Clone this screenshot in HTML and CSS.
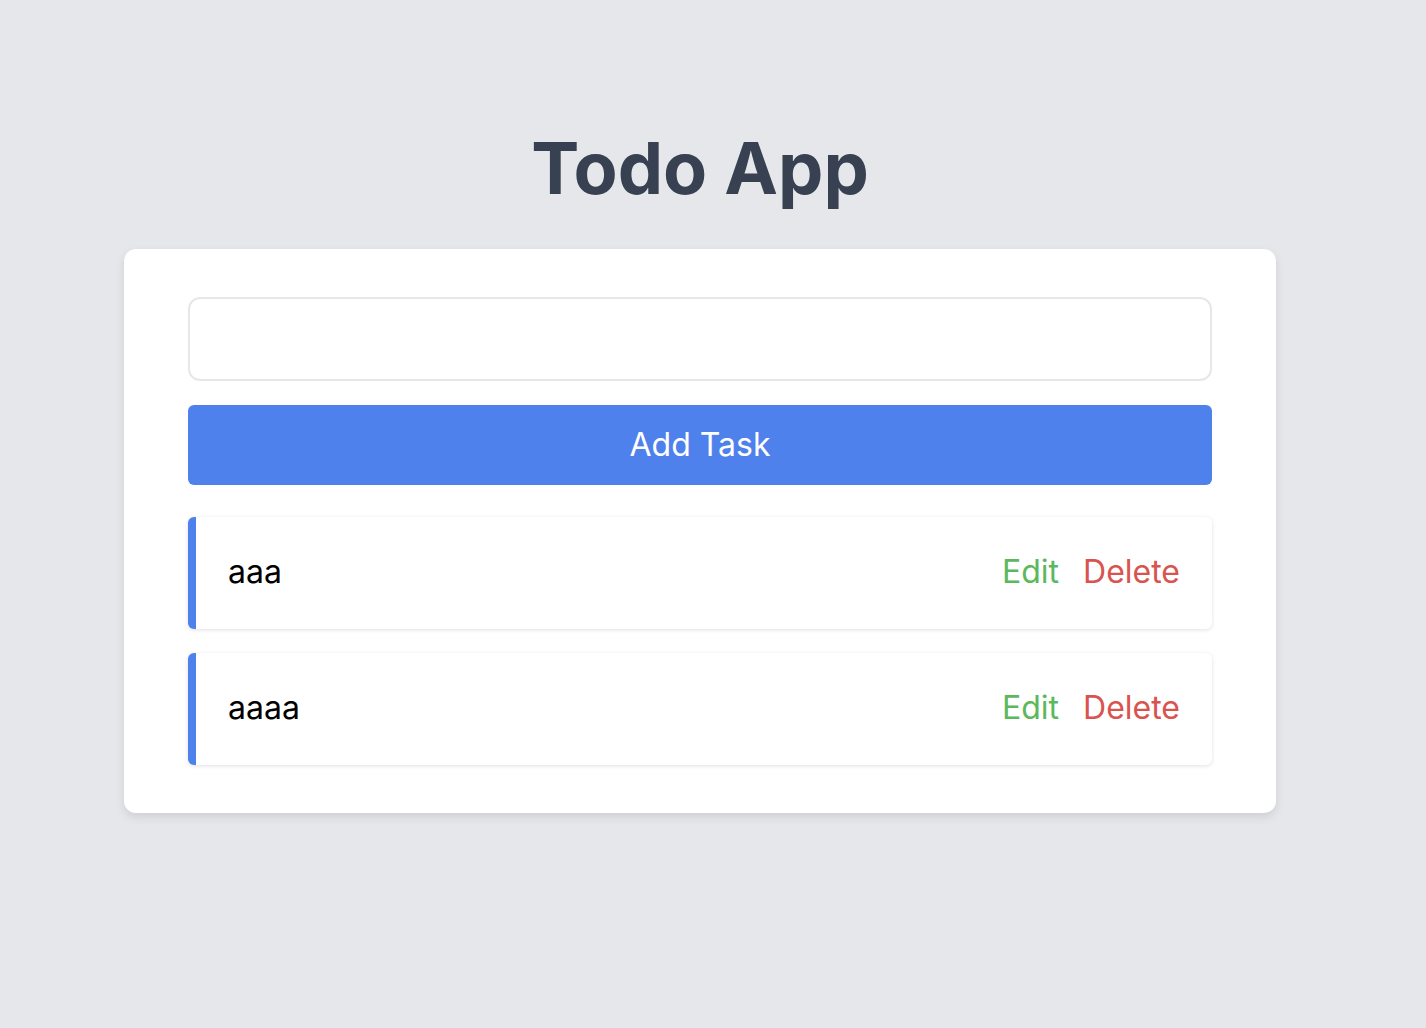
FILE: index.html
```html
<!DOCTYPE html>
<html lang="en">
<head>
<meta charset="utf-8">
<title>Todo App</title>
<link rel="stylesheet" href="styles.css">
</head>
<body>
<main class="app">
  <h1 class="title">Todo App</h1>
  <section class="card">
    <input class="task-input" type="text" aria-label="New task">
    <button class="add-btn" type="button">Add Task</button>
    <ul class="task-list">
      <li class="task">
        <span class="task-text">aaa</span>
        <div class="actions">
          <button class="edit" type="button">Edit</button>
          <button class="delete" type="button">Delete</button>
        </div>
      </li>
      <li class="task">
        <span class="task-text">aaaa</span>
        <div class="actions">
          <button class="edit" type="button">Edit</button>
          <button class="delete" type="button">Delete</button>
        </div>
      </li>
    </ul>
  </section>
</main>
</body>
</html>
```
FILE: styles.css
```css
* { box-sizing: border-box; }
html, body { margin: 0; padding: 0; }
html { background: #e5e7eb; }
body {
  width: 1400px;
  background: #e5e7eb;
  font-family: Inter, "Noto Sans", sans-serif;
  min-height: 1028px;
}
.app {
  width: 1152px;
  margin: 0 auto;
  padding-top: 124px;
}
.title {
  margin: 0 0 38px;
  text-align: center;
  font-size: 72px;
  line-height: 87px;
  font-weight: 700;
  color: #374151;
}
.card {
  background: #fff;
  border-radius: 12px;
  padding: 48px 64px;
  box-shadow: 0 4px 10px rgba(0, 0, 0, 0.1);
  display: flex;
  flex-direction: column;
}
.task-input {
  display: block;
  width: 100%;
  height: 84px;
  border: 2px solid #e5e7eb;
  border-radius: 12px;
  background: #fff;
  font: inherit;
  font-size: 32px;
  padding: 0 24px;
  outline: none;
}
.add-btn {
  margin-top: 24px;
  height: 80px;
  border: none;
  border-radius: 6px;
  background: #4f81ed;
  color: #fff;
  font-family: inherit;
  font-size: 32px;
  padding: 0 0 2px;
  cursor: pointer;
}
.task-list {
  list-style: none;
  margin: 32px 0 0;
  padding: 0;
  display: flex;
  flex-direction: column;
  gap: 24px;
}
.task {
  height: 112px;
  display: flex;
  align-items: center;
  justify-content: space-between;
  background: #fff;
  border-left: 8px solid #4f81ed;
  border-radius: 6px;
  padding: 0 32px 3px;
  box-shadow: 0 1px 4px rgba(0, 0, 0, 0.12);
}
.task-text {
  font-size: 32px;
  color: #000;
}
.actions {
  display: flex;
  gap: 24px;
}
.actions button {
  border: none;
  background: none;
  padding: 0;
  font-family: inherit;
  font-size: 32px;
  cursor: pointer;
}
.edit { color: #5cb85c; }
.delete { color: #d9534f; }
```
